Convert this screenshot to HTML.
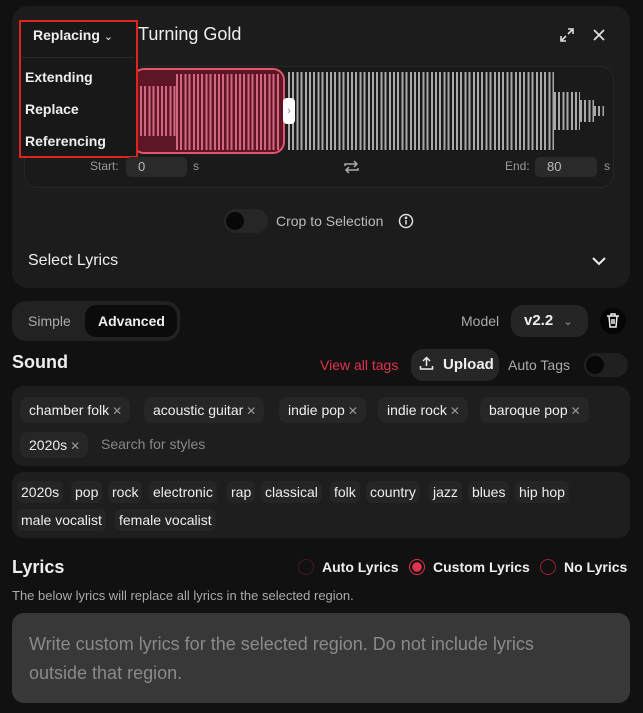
<!DOCTYPE html>
<html><head><style>
*{box-sizing:border-box;margin:0;padding:0}
body{width:643px;height:713px;background:#111;font-family:"Liberation Sans",sans-serif;color:#eee;position:relative;overflow:hidden}
.a{position:absolute;white-space:nowrap}
.card{left:12px;top:6px;width:618px;height:282px;background:#1c1c1c;border-radius:16px}
.wave{left:24px;top:66px;width:590px;height:122px;border:1px solid #262626;border-radius:14px;background:#1a1a1a}
.bars{background:repeating-linear-gradient(90deg,#a9a9a9 0 2px,transparent 2px 4.2px)}
.pb{background:repeating-linear-gradient(90deg,#d2687e 0 2px,transparent 2px 4.2px)}
.inp{background:#2a2a2a;border-radius:5px;color:#bbb;font-size:13px;padding:4px 12px}
.tag{background:#262626;border-radius:8px;padding:5px 8px 5px 9px;font-size:14px;color:#eee}
.tag i{font-style:normal;color:#999;font-size:12px;margin-left:3px}
.sg{position:absolute;background:#252525;border-radius:6px;padding:3px 4px;font-size:14px;color:#eee;white-space:nowrap}
.radio{width:16px;height:16px;border-radius:50%;border:1.5px solid #8a2233}
</style></head><body>
<div class="a card"></div>
<div class="a wave"></div>
<div class="a" style="left:132px;top:68px;width:153px;height:86px;background:#5e1626;border:2px solid #e0566e;border-radius:12px"></div>
<div class="a pb" style="left:140px;top:86px;width:36px;height:50px"></div>
<div class="a pb" style="left:176px;top:74px;width:105px;height:76px"></div>
<div class="a bars" style="left:288px;top:72px;width:266px;height:78px"></div>
<div class="a bars" style="left:554px;top:92px;width:26px;height:38px"></div>
<div class="a bars" style="left:580px;top:100px;width:14px;height:22px"></div>
<div class="a bars" style="left:594px;top:106px;width:10px;height:10px"></div>
<div class="a" style="left:283px;top:98px;width:12px;height:26px;background:#fff;border-radius:4px;color:#888;font-size:11px;text-align:center;line-height:26px">›</div>
<div class="a" style="left:19px;top:20px;width:119px;height:138px;background:#181818;border:2px solid #e0231d"></div>
<div class="a" style="left:33px;top:27px;font-size:14px;font-weight:bold">Replacing <span style="font-weight:normal;font-size:11px">&#8964;</span></div>
<div class="a" style="left:22px;top:57px;width:112px;height:1px;background:#2a2a2a"></div>
<div class="a" style="left:25px;top:69px;font-size:14px;font-weight:bold">Extending</div>
<div class="a" style="left:25px;top:101px;font-size:14px;font-weight:bold">Replace</div>
<div class="a" style="left:25px;top:133px;font-size:14px;font-weight:bold">Referencing</div>
<div class="a" style="left:138px;top:24px;font-size:18px">Turning Gold</div>
<svg class="a" style="left:558px;top:26px" width="18" height="18" viewBox="0 0 18 18" fill="none" stroke="#ddd" stroke-width="1.6"><path d="M10 3h5v5M15 3l-5 5M8 15H3v-5M3 15l5-5"/></svg>
<svg class="a" style="left:592px;top:28px" width="14" height="14" viewBox="0 0 14 14" stroke="#ddd" stroke-width="1.8"><path d="M2 2l10 10M12 2L2 12"/></svg>
<div class="a" style="left:90px;top:159px;font-size:12px;color:#999">Start:</div>
<div class="a inp" style="left:126px;top:157px;width:61px;height:20px;line-height:12px">0</div>
<div class="a" style="left:193px;top:159px;font-size:12px;color:#999">s</div>
<svg class="a" style="left:343px;top:159px" width="17" height="16" viewBox="0 0 17 16" fill="none" stroke="#aaa" stroke-width="1.5"><path d="M2 7V5h12M11 2l3 3-3 3M15 9v2H3M6 14l-3-3 3-3"/></svg>
<div class="a" style="left:505px;top:159px;font-size:12px;color:#999">End:</div>
<div class="a inp" style="left:535px;top:157px;width:62px;height:20px;line-height:12px">80</div>
<div class="a" style="left:604px;top:159px;font-size:12px;color:#999">s</div>
<div class="a" style="left:224px;top:209px;width:44px;height:24px;border-radius:12px;background:#262626"></div>
<div class="a" style="left:226px;top:212px;width:18px;height:18px;border-radius:50%;background:#080808"></div>
<div class="a" style="left:276px;top:213px;font-size:14px;color:#bbb">Crop to Selection</div>
<svg class="a" style="left:398px;top:213px" width="16" height="16" viewBox="0 0 16 16" fill="none" stroke="#ddd" stroke-width="1.5"><circle cx="8" cy="8" r="6.5"/><path d="M8 7v4.5"/><circle cx="8" cy="4.8" r="0.6" fill="#ddd"/></svg>
<div class="a" style="left:28px;top:252px;font-size:16px">Select Lyrics</div>
<svg class="a" style="left:591px;top:255px" width="16" height="12" viewBox="0 0 16 12" fill="none" stroke="#eee" stroke-width="2"><path d="M2 3l6 6 6-6"/></svg>
<div class="a" style="left:12px;top:301px;width:168px;height:40px;border-radius:14px;background:#222"></div>
<div class="a" style="left:85px;top:305px;width:92px;height:32px;border-radius:11px;background:#0b0b0b"></div>
<div class="a" style="left:28px;top:313px;font-size:14px;color:#aaa">Simple</div>
<div class="a" style="left:98px;top:313px;font-size:14px;font-weight:bold">Advanced</div>
<div class="a" style="left:461px;top:313px;font-size:14px;color:#aaa">Model</div>
<div class="a" style="left:511px;top:305px;width:77px;height:32px;border-radius:12px;background:#252525"></div>
<div class="a" style="left:524px;top:312px;font-size:15px;font-weight:bold">v2.2 <span style="font-weight:normal;font-size:11px;color:#999;margin-left:6px">&#8964;</span></div>
<div class="a" style="left:600px;top:308px;width:26px;height:26px;border-radius:50%;background:#050505"></div>
<svg class="a" style="left:606px;top:313px" width="14" height="15" viewBox="0 0 14 15" fill="none" stroke="#eee" stroke-width="1.5"><path d="M1 3h12M5 3V1h4v2M3 3l1 11h6l1-11M6 6v5M8 6v5"/></svg>
<div class="a" style="left:12px;top:352px;font-size:18px;font-weight:bold">Sound</div>
<div class="a" style="left:320px;top:357px;font-size:14px;color:#e0334d">View all tags</div>
<div class="a" style="left:411px;top:349px;width:88px;height:32px;border-radius:12px;background:#262626"></div>
<svg class="a" style="left:419px;top:356px" width="15" height="15" viewBox="0 0 15 15" fill="none" stroke="#eee" stroke-width="1.5"><path d="M7.5 10V2M4 5l3.5-3.5L11 5M1.5 10v3h12v-3"/></svg>
<div class="a" style="left:443px;top:356px;font-size:15px;font-weight:bold">Upload</div>
<div class="a" style="left:508px;top:357px;font-size:14px;color:#aaa">Auto Tags</div>
<div class="a" style="left:584px;top:353px;width:44px;height:24px;border-radius:12px;background:#202020"></div>
<div class="a" style="left:586px;top:356px;width:18px;height:18px;border-radius:50%;background:#080808"></div>
<div class="a" style="left:12px;top:386px;width:618px;height:80px;border-radius:12px;background:#1e1e1e"></div>
<div class="a tag" style="left:20px;top:397px">chamber folk<i>✕</i></div>
<div class="a tag" style="left:144px;top:397px">acoustic guitar<i>✕</i></div>
<div class="a tag" style="left:279px;top:397px">indie pop<i>✕</i></div>
<div class="a tag" style="left:378px;top:397px">indie rock<i>✕</i></div>
<div class="a tag" style="left:480px;top:397px">baroque pop<i>✕</i></div>
<div class="a tag" style="left:20px;top:432px">2020s<i>✕</i></div>
<div class="a" style="left:101px;top:436px;font-size:14px;color:#888">Search for styles</div>
<div class="a" style="left:12px;top:472px;width:618px;height:66px;border-radius:12px;background:#1e1e1e"></div>
<span class="sg" style="left:17px;top:481px">2020s</span>
<span class="sg" style="left:71px;top:481px">pop</span>
<span class="sg" style="left:108px;top:481px">rock</span>
<span class="sg" style="left:149px;top:481px">electronic</span>
<span class="sg" style="left:227px;top:481px">rap</span>
<span class="sg" style="left:261px;top:481px">classical</span>
<span class="sg" style="left:330px;top:481px">folk</span>
<span class="sg" style="left:366px;top:481px">country</span>
<span class="sg" style="left:429px;top:481px">jazz</span>
<span class="sg" style="left:468px;top:481px">blues</span>
<span class="sg" style="left:515px;top:481px">hip hop</span>
<span class="sg" style="left:17px;top:509px">male vocalist</span>
<span class="sg" style="left:115px;top:509px">female vocalist</span>
<div class="a" style="left:12px;top:557px;font-size:18px;font-weight:bold">Lyrics</div>
<div class="a radio" style="left:298px;top:559px;border-color:#4a1822"></div>
<div class="a" style="left:322px;top:559px;font-size:14px;font-weight:bold">Auto Lyrics</div>
<div class="a radio" style="left:409px;top:559px;border-color:#e0334d;background:radial-gradient(circle,#e0334d 0 4.5px,transparent 5px)"></div>
<div class="a" style="left:433px;top:559px;font-size:14px;font-weight:bold">Custom Lyrics</div>
<div class="a radio" style="left:540px;top:559px;border-color:#9a2236"></div>
<div class="a" style="left:564px;top:559px;font-size:14px;font-weight:bold">No Lyrics</div>
<div class="a" style="left:12px;top:588px;font-size:13px;color:#aaa">The below lyrics will replace all lyrics in the selected region.</div>
<div class="a" style="left:12px;top:613px;width:618px;height:90px;border-radius:12px;background:#383838"></div>
<div class="a" style="left:29px;top:630px;font-size:18px;color:#8a8a8a;line-height:29px;white-space:normal;width:555px">Write custom lyrics for the selected region. Do not include lyrics outside that region.</div>
</body></html>
